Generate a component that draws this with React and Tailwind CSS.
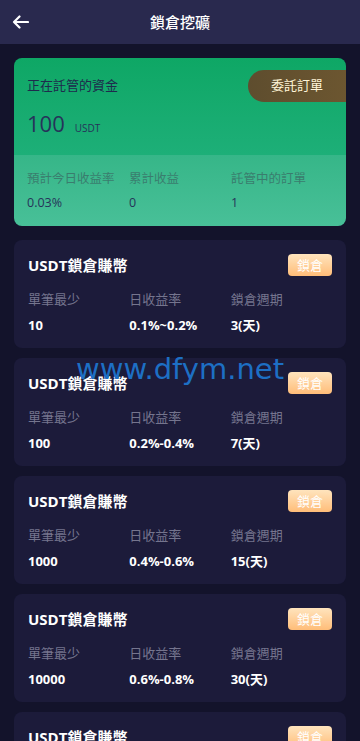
import React from 'react';

const products = [
  { min: '10', rate: '0.1%~0.2%', days: '3(天)' },
  { min: '100', rate: '0.2%-0.4%', days: '7(天)' },
  { min: '1000', rate: '0.4%-0.6%', days: '15(天)' },
  { min: '10000', rate: '0.6%-0.8%', days: '30(天)' },
  { min: '100000', rate: '0.8%-1.0%', days: '60(天)' },
];

const font = { fontFamily: '"Open Sans", "Noto Sans CJK TC", sans-serif' };

const App = () => {
  return (
    <div className="min-h-[741px] bg-[#13132b] relative" style={font}>
      {/* Header */}
      <div className="h-[44px] bg-[#29294e] flex items-center relative">
        <button className="pl-[12px] text-white">
          <svg width="17" height="14" viewBox="0 0 17 14" fill="none">
            <path d="M16 7H2M7.5 1.5L2 7l5.5 5.5" stroke="white" strokeWidth="2.2" strokeLinecap="round" strokeLinejoin="round" />
          </svg>
        </button>
        <h1 className="absolute left-1/2 -translate-x-1/2 text-white text-[15px] font-medium">鎖倉挖礦</h1>
      </div>

      <div className="px-[14px] pt-[14px]">
        {/* Summary card */}
        <div className="rounded-[8px] overflow-hidden mb-[14px]">
          <div className="h-[97px] bg-gradient-to-b from-[#0ea765] to-[#1daf78] pt-[12px] relative">
            <div className="flex justify-between items-center">
              <p className="pl-[13px] text-[13px] text-[#1e2b4d]">正在託管的資金</p>
              <div className="w-[98px] h-[32px] rounded-l-full bg-gradient-to-r from-[#5e4d2e] to-[#6c5630] flex items-center justify-center text-[13px] text-[#fff4d6]">
                委託訂單
              </div>
            </div>
            <div className="pl-[13px] mt-[5px] flex items-baseline">
              <span className="text-[22px] text-[#26335a]">100</span>
              <span className="ml-[10px] text-[10px] text-[#26335a]">USDT</span>
            </div>
          </div>
          <div className="h-[71px] bg-gradient-to-b from-[#36b688] to-[#48c098] px-[13px] pt-[15px] grid grid-cols-3 content-start">
            <div>
              <p className="text-[12.5px] text-[#3a7d6e]">預計今日收益率</p>
              <p className="text-[12.5px] text-[#26335a] mt-[5px]">0.03%</p>
            </div>
            <div>
              <p className="text-[12.5px] text-[#3a7d6e]">累計收益</p>
              <p className="text-[12.5px] text-[#26335a] mt-[5px]">0</p>
            </div>
            <div>
              <p className="text-[12.5px] text-[#3a7d6e]">託管中的訂單</p>
              <p className="text-[12.5px] text-[#26335a] mt-[5px]">1</p>
            </div>
          </div>
        </div>

        {/* Products */}
        <div className="space-y-[10px]">
          {products.map((p, i) => (
            <div key={i} className="h-[108px] rounded-[8px] bg-[#1c1b3a] px-[14px] pt-[14px]">
              <div className="flex justify-between items-center">
                <h3 className="text-[15px] font-bold text-white">USDT鎖倉賺幣</h3>
                <span className="w-[44px] h-[22px] rounded-[4px] bg-gradient-to-b from-[#ffe4bd] to-[#ffbd78] text-white text-[13px] flex items-center justify-center">
                  鎖倉
                </span>
              </div>
              <div className="grid grid-cols-3 mt-[13px]">
                <div>
                  <p className="text-[13px] text-[#75758e]">單筆最少</p>
                  <p className="text-[13px] font-bold text-white mt-[7px]">{p.min}</p>
                </div>
                <div>
                  <p className="text-[13px] text-[#75758e]">日收益率</p>
                  <p className="text-[13px] font-bold text-white mt-[7px]">{p.rate}</p>
                </div>
                <div>
                  <p className="text-[13px] text-[#75758e]">鎖倉週期</p>
                  <p className="text-[13px] font-bold text-white mt-[7px]">{p.days}</p>
                </div>
              </div>
            </div>
          ))}
        </div>
      </div>

      {/* Watermark */}
      <div className="absolute top-[348px] left-0 right-0 text-center text-[29px] text-[#1d6fc4] pointer-events-none" style={{ fontFamily: '"DejaVu Sans", sans-serif' }}>
        www.dfym.net
      </div>
    </div>
  );
};

export default App;
